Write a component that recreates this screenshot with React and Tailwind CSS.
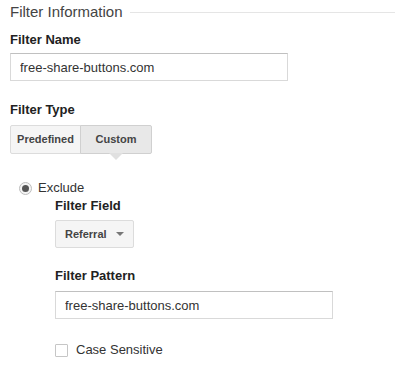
import React, { useState } from 'react'

const App = () => {
  const [type, setType] = useState("custom");
  const [name, setName] = useState("free-share-buttons.com");
  const [pattern, setPattern] = useState("free-share-buttons.com");
  const [caseSensitive, setCaseSensitive] = useState(false);

  return (
    <div className="w-[395px] h-[373px] bg-white pl-[10px] pt-[2px] text-[#333] font-['Liberation_Sans',Arial,sans-serif] overflow-hidden">
      <div className="flex items-center gap-[7px]">
        <span className="text-[15px] leading-[20px] text-[#444]">Filter Information</span>
        <div className="flex-1 h-px bg-[#e5e5e5]" />
      </div>

      <div className="mt-[10px] text-[13px] leading-[16px] font-bold text-[#222]">Filter Name</div>
      <input
        type="text"
        className="mt-[5px] block w-[278px] h-[28px] px-[9px] text-[13px] text-[#333] border border-[#d9d9d9] border-t-[#c0c0c0] outline-none"
        value={name}
        onChange={({ target }) => setName(target.value)}
      />

      <div className="mt-[21px] text-[13px] leading-[16px] font-bold text-[#222]">Filter Type</div>
      <div className="mt-[7px] flex">
        <button
          className={`relative h-[29px] w-[71px] text-[11px] font-bold text-[#444] border border-[#dcdcdc] rounded-l-[2px] ${type === "predefined" ? "bg-[#e8e8e8]" : "bg-[#f5f5f5]"}`}
          onClick={() => setType("predefined")}
        >
          Predefined
        </button>
        <button
          className={`relative h-[29px] w-[72px] -ml-px text-[11px] font-bold text-[#444] border border-[#d0d0d0] rounded-r-[2px] ${type === "custom" ? "bg-[#e8e8e8]" : "bg-[#f5f5f5]"}`}
          onClick={() => setType("custom")}
        >
          Custom
          {type === "custom" && (
            <span className="absolute left-1/2 -translate-x-1/2 top-full w-0 h-0 border-l-[7px] border-r-[7px] border-t-[7px] border-l-transparent border-r-transparent border-t-[#e0e0e0]" />
          )}
        </button>
      </div>

      <div className="mt-[26px] ml-[9px] flex items-center gap-[6px]">
        <span className="w-[13px] h-[13px] rounded-full border border-[#bdbdbd] bg-[#f4f4f4] flex items-center justify-center">
          <span className="w-[7px] h-[7px] rounded-full bg-[#555]" />
        </span>
        <span className="text-[13px] leading-[16px] text-[#333]">Exclude</span>
      </div>

      <div className="ml-[45px]">
        <div className="mt-[2px] text-[13px] leading-[16px] font-bold text-[#222]">Filter Field</div>
        <button className="mt-[6px] flex items-center w-[79px] h-[28px] pl-[9px] pr-[9px] bg-[#f5f5f5] border border-[#dcdcdc] rounded-[2px]">
          <span className="text-[11px] font-bold text-[#444]">Referral</span>
          <span className="ml-auto w-0 h-0 border-l-[4px] border-r-[4px] border-t-[4px] border-l-transparent border-r-transparent border-t-[#777]" />
        </button>

        <div className="mt-[20px] text-[13px] leading-[16px] font-bold text-[#222]">Filter Pattern</div>
        <input
          type="text"
          className="mt-[7px] block w-[278px] h-[28px] px-[9px] text-[13px] text-[#333] border border-[#d9d9d9] border-t-[#c0c0c0] outline-none"
          value={pattern}
          onChange={({ target }) => setPattern(target.value)}
        />

        <label className="mt-[23px] flex items-center gap-[8px] cursor-pointer">
          <span
            className={`w-[13px] h-[13px] border border-[#c6c6c6] rounded-[1px] ${caseSensitive ? "bg-[#555]" : "bg-white"}`}
            onClick={() => setCaseSensitive(!caseSensitive)}
          />
          <span className="text-[13px] leading-[16px] text-[#333]">Case Sensitive</span>
        </label>
      </div>
    </div>
  )
}

export default App
